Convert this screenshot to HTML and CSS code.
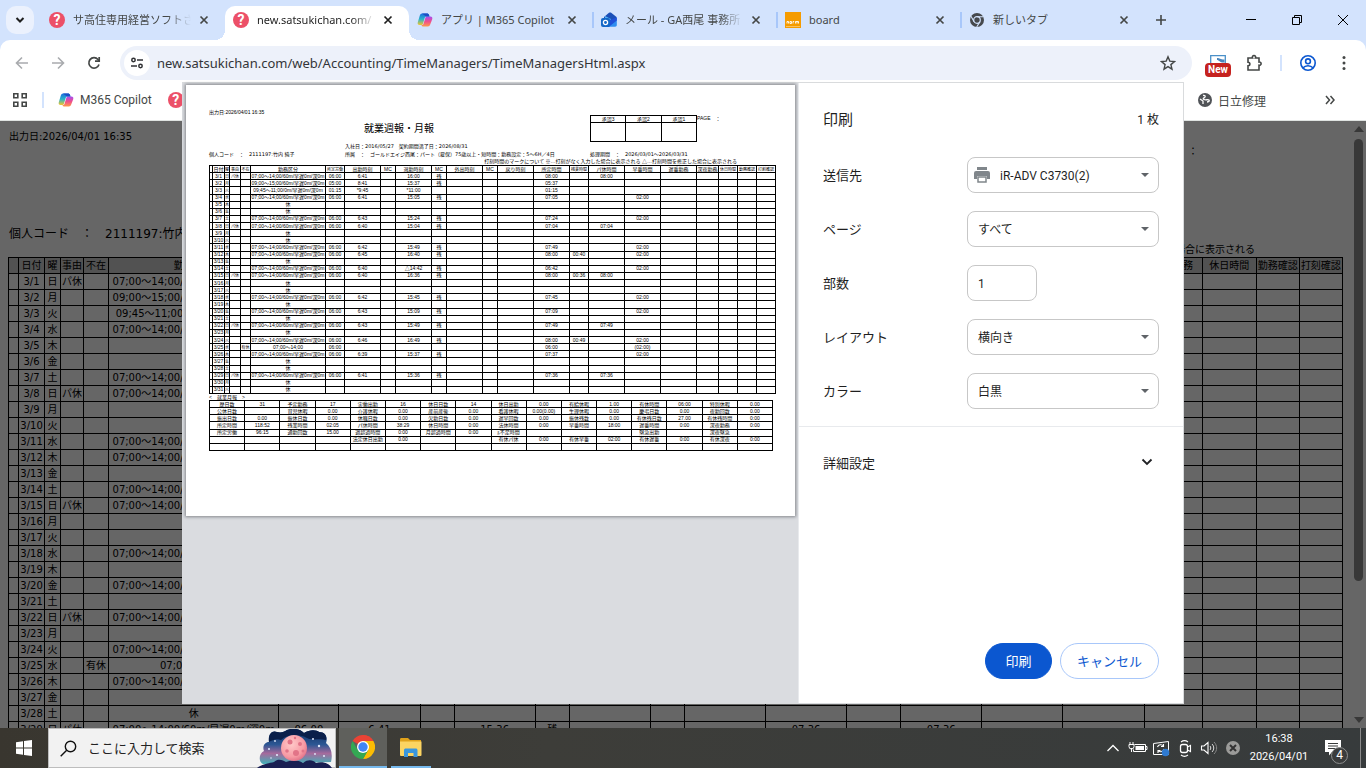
FILE: index.html
```
<!DOCTYPE html>
<html lang="ja">
<head>
    <meta charset="UTF-8">
    <meta name="viewport" content="width=device-width, initial-scale=1.0">
    <title>就業週報・月報</title>
    <link rel="stylesheet" href="styles.css">
</head>
<body>
    <!-- shared icons -->
    <svg class="defs" width="0" height="0" aria-hidden="true">
        <defs>
            <linearGradient id="cp-a" x1="0" y1="0" x2="0" y2="1">
                <stop offset="0" stop-color="#1b6fe0"/><stop offset="0.5" stop-color="#2bb5c9"/><stop offset="1" stop-color="#f5c62b"/>
            </linearGradient>
            <linearGradient id="cp-b" x1="0" y1="0" x2="0" y2="1">
                <stop offset="0" stop-color="#a74df0"/><stop offset="0.5" stop-color="#ef4f8c"/><stop offset="1" stop-color="#ff9a4a"/>
            </linearGradient>
            <symbol id="i-copilot" viewBox="0 0 16 16">
                <path d="M5 1.5h5c1 0 1.700.5 2 1.500l.5 1.500H9.500c-1 0-1.500.5-1.800 1.500L6 11.500c-.3 1-1 1.500-2 1.500H2.600C1 13 .3 12 .8 10.200L2.800 3.500C3.200 2.200 4 1.500 5 1.500z" fill="url(#cp-a)"/>
                <path d="M11 14.500H6.500c-1 0-1.700-.5-2-1.500 1.300 0 1.800-.6 2.100-1.600L8.300 6c.3-1 .9-1.500 1.900-1.500h3.200c1.600 0 2.300 1 1.800 2.700l-2 5.300c-.4 1.300-1.200 2-2.200 2z" fill="url(#cp-b)"/>
                <path d="M5 1.500h5c1 0 1.700.5 2 1.500l.5 1.500H9z" fill="#1c4fc4"/>
            </symbol>
            <symbol id="i-x" viewBox="0 0 10 10">
                <path d="M1.500 1.500l7 7M8.500 1.500l-7 7" stroke="currentColor" stroke-width="1.700"/>
            </symbol>
        </defs>
    </svg>

    <div class="tab-strip">
        <button class="tab-search" aria-label="タブを検索"><svg width="10" height="10" viewBox="0 0 10 10"><path d="M1.500 3l3.500 3.500L8.500 3" fill="none" stroke="#1f1f1f" stroke-width="2"/></svg></button>
        <div class="tab">
            <span class="fav-q">?</span>
            <span class="tab-title">サ高住専用経営ソフトさ</span>
            <button class="tab-close" aria-label="閉じる"><svg width="10" height="10"><use href="#i-x"/></svg></button>
        </div>
        <div class="tab active">
            <span class="fav-q">?</span>
            <span class="tab-title">new.satsukichan.com/</span>
            <button class="tab-close" aria-label="閉じる"><svg width="10" height="10"><use href="#i-x"/></svg></button>
        </div>
        <div class="tab">
            <svg class="fav" width="16" height="16"><use href="#i-copilot"/></svg>
            <span class="tab-title full">アプリ | M365 Copilot</span>
            <button class="tab-close" aria-label="閉じる"><svg width="10" height="10"><use href="#i-x"/></svg></button>
        </div>
        <div class="tab sep">
            <svg class="fav" width="16" height="16" viewBox="0 0 16 16">
                <path d="M3 5l5-4.200c.7-.5 1.500-.5 2.200 0L15.500 5v1L9 10 3 7z" fill="#1a4fb8"/>
                <path d="M4 4l6 3-2 4-4-1z" fill="#53b1f5"/>
                <path d="M15.800 5.500V13c0 1-.7 1.700-1.700 1.700H5L15.800 5.500z" fill="#2f8df0"/>
                <path d="M9 8l6.800-2.500v3L8 14.700H5z" fill="#2150d8"/>
                <rect x="0" y="6" width="9" height="9" rx="2" fill="#1468c7"/>
                <circle cx="4.500" cy="10.500" r="2.100" fill="none" stroke="#fff" stroke-width="1.300"/>
            </svg>
            <span class="tab-title">メール - GA西尾 事務所</span>
            <button class="tab-close" aria-label="閉じる"><svg width="10" height="10"><use href="#i-x"/></svg></button>
        </div>
        <div class="tab sep">
            <svg class="fav" width="16" height="16" viewBox="0 0 16 16">
                <rect width="16" height="16" fill="#f59b00"/>
                <path d="M2 11.500V9.500h1.500v2M5 9.500h1.500v2H5zM8 11.500v-2h1.200M10.500 11.500v-2h3v2M12 9.500v2" fill="none" stroke="#fff" stroke-width="0.900"/>
                <path d="M1 14.500h14" stroke="#fbd28a" stroke-width="0.700"/>
            </svg>
            <span class="tab-title full">board</span>
            <button class="tab-close" aria-label="閉じる"><svg width="10" height="10"><use href="#i-x"/></svg></button>
        </div>
        <div class="tab sep">
            <svg class="fav" width="16" height="16" viewBox="0 0 16 16">
                <circle cx="8" cy="8" r="7" fill="#46494d"/>
                <circle cx="8" cy="8" r="3.300" fill="#46494d" stroke="#d3e3fd" stroke-width="1.200"/>
                <path d="M8 4.700h6.500M5.100 9.700L2 4.300M10.900 9.700L7.700 15" stroke="#d3e3fd" stroke-width="1.100"/>
            </svg>
            <span class="tab-title full">新しいタブ</span>
            <button class="tab-close" aria-label="閉じる"><svg width="10" height="10"><use href="#i-x"/></svg></button>
        </div>
        <button class="new-tab" aria-label="新しいタブを開く"><svg width="12" height="12" viewBox="0 0 12 12"><path d="M6 1v10M1 6h10" stroke="#444746" stroke-width="1.600"/></svg></button>
        <div class="window-controls">
            <button aria-label="最小化"><svg width="10" height="10" viewBox="0 0 10 10"><path d="M0 4.500h10" stroke="#000"/></svg></button>
            <button aria-label="元に戻す"><svg width="10" height="10" viewBox="0 0 10 10"><path d="M.5 2.500h7v7h-7zM2.500 2.500v-2h7v7h-2" fill="none" stroke="#000"/></svg></button>
            <button aria-label="ウィンドウを閉じる"><svg width="10" height="10" viewBox="0 0 10 10"><path d="M0 0l10 10M10 0L0 10" stroke="#000"/></svg></button>
        </div>
    </div>

    <div class="chrome">
        <div class="toolbar">
            <button class="tool" aria-label="戻る"><svg width="16" height="16" viewBox="0 0 16 16"><path d="M14 8H3M8 2.500L2.500 8 8 13.500" fill="none" stroke="#a9abae" stroke-width="1.600"/></svg></button>
            <button class="tool" aria-label="進む"><svg width="16" height="16" viewBox="0 0 16 16"><path d="M2 8h11M8 2.500L13.500 8 8 13.500" fill="none" stroke="#a9abae" stroke-width="1.600"/></svg></button>
            <button class="tool" aria-label="再読み込み"><svg width="16" height="16" viewBox="0 0 16 16"><path d="M13 9.500A5.200 5.200 0 1 1 12 4.500l1.500 1.500" fill="none" stroke="#444746" stroke-width="1.700"/><path d="M13.200 2v4.200H9" fill="none" stroke="#444746" stroke-width="1.700"/></svg></button>
            <div class="omnibox">
                <button class="site-info" aria-label="サイト情報"><svg width="14" height="14" viewBox="0 0 14 14"><g fill="none" stroke="#303134" stroke-width="1.500"><circle cx="3.500" cy="4" r="1.700"/><path d="M7 4h6M1 10h6"/><circle cx="10.500" cy="10" r="1.700"/></g></svg></button>
                <input class="url" type="text" aria-label="アドレス" value="new.satsukichan.com/web/Accounting/TimeManagers/TimeManagersHtml.aspx">
                <button class="star" aria-label="ブックマークに追加"><svg width="16" height="16" viewBox="0 0 16 16"><path d="M8 1.800l1.800 4.300 4.700.4-3.600 3.100 1.100 4.600L8 11.700l-4 2.500 1.100-4.600L1.500 6.500l4.700-.4z" fill="none" stroke="#444746" stroke-width="1.400"/></svg></button>
            </div>
            <button class="ext" aria-label="拡張機能"><svg width="16" height="12" viewBox="0 0 16 12"><path d="M.7 12V.7h14.600V12" fill="#fff" stroke="#4a90c8" stroke-width="1.300"/><path d="M7 3c3 0 3 1.500 7.500 1.500v3C10 8 9 5 7 5z" fill="#4a86bd"/></svg><span class="badge">New</span></button>
            <button class="tool" aria-label="拡張機能メニュー"><svg width="18" height="18" viewBox="0 0 18 18"><path d="M3 4h4.500a1.700 1.700 0 1 1 3 0H14v4a1.700 1.700 0 1 1 0 3.300V16H3v-4.300c2.500 0 2.500-3.400 0-3.400z" fill="none" stroke="#444746" stroke-width="1.600"/></svg></button>
            <span class="v-sep"></span>
            <button class="tool" aria-label="プロフィール"><svg width="18" height="18" viewBox="0 0 18 18"><g fill="none" stroke="#0b57d0" stroke-width="1.600"><circle cx="9" cy="9" r="7.200"/><circle cx="9" cy="7.300" r="2.400"/><path d="M3.800 14c2.800-3 7.600-3 10.400 0"/></g></svg></button>
            <button class="tool" aria-label="メニュー"><svg width="4" height="16" viewBox="0 0 4 16"><g fill="#444746"><circle cx="2" cy="2.500" r="1.500"/><circle cx="2" cy="8" r="1.500"/><circle cx="2" cy="13.500" r="1.500"/></g></svg></button>
        </div>
        <div class="bookmarks">
            <button class="apps" aria-label="アプリ"><svg width="14" height="14" viewBox="0 0 14 14"><path d="M.8.8h4v4h-4zM9.200.8h4v4h-4zM.8 9.200h4v4h-4zM9.200 9.200h4v4h-4z" fill="none" stroke="#444746" stroke-width="1.600"/></svg></button>
            <span class="v-sep"></span>
            <a href="#"><svg width="16" height="16"><use href="#i-copilot"/></svg>M365 Copilot</a>
            <a href="#" aria-label="さつき"><span class="fav-q">?</span></a>
            <a href="#" class="last"><svg width="14" height="14" viewBox="0 0 14 14"><circle cx="7" cy="7" r="7" fill="#505357"/><path d="M5 2.500c2-.5 2.500.5 2 1.500S4 5.500 6 6.500s4-.5 5 .5-1 2-2 2M2 6l3 2v3" fill="none" stroke="#fff" stroke-width="1.300"/></svg>日立修理</a>
            <button class="more" aria-label="その他のブックマーク"><svg width="10" height="10" viewBox="0 0 10 10"><path d="M1 1l3.500 4L1 9M5.500 1L9 5 5.500 9" fill="none" stroke="#444746" stroke-width="1.500"/></svg></button>
        </div>
    </div>

    <main class="viewport">
        <div class="report">
            <div class="report-head">
                <span class="printed">出力日:2026/04/01 16:35</span>
                <h1>就業週報・月報</h1>
                <div class="approval">
                    <table>
                        <tr><th>承認3</th><th>承認2</th><th>承認1</th></tr>
                        <tr><td></td><td></td><td></td></tr>
                    </table>
                    <span>PAGE　：</span>
                </div>
                <span class="joined">入社日：2016/05/27　契約期間満了日：2026/08/31</span>
                <span class="code">個人コード　：　2111197:竹内 純子</span>
                <span class="team">所属　：　ゴールドエイジ西尾：パート（雇保）75歳以上・短時間：勤務設定：5～6H／4日</span>
                <span class="period">処理期間　：　2026/03/01～2026/03/31</span>
                <span class="note">打刻時間のマークについて ※…打刻がなく入力した場合に表示される △…打刻時間を修正した場合に表示される</span>
            </div>
            <table class="days"></table>
        </div>
        <div class="scrim"></div>
        <div class="scrollbar"><i class="up"></i><i class="thumb"></i><i class="down"></i></div>
    </main>

    <div class="dialog-layer">
        <div class="dialog" role="dialog" aria-label="印刷">
            <div class="preview">
                <div class="sheet report print">
                    <div class="report-head">
                        <span class="printed">出力日:2026/04/01 16:35</span>
                        <h1>就業週報・月報</h1>
                        <div class="approval">
                            <table>
                                <tr><th>承認3</th><th>承認2</th><th>承認1</th></tr>
                                <tr><td></td><td></td><td></td></tr>
                            </table>
                            <span>PAGE　：</span>
                        </div>
                        <span class="joined">入社日：2016/05/27　契約期間満了日：2026/08/31</span>
                        <span class="code">個人コード　：　2111197:竹内 純子</span>
                        <span class="team">所属　：　ゴールドエイジ西尾：パート（雇保）75歳以上・短時間：勤務設定：5～6H／4日</span>
                        <span class="period">処理期間　：　2026/03/01～2026/03/31</span>
                        <span class="note">打刻時間のマークについて ※…打刻がなく入力した場合に表示される △…打刻時間を修正した場合に表示される</span>
                    </div>
                    <table class="days"></table>
                    <p class="month-label">&lt;　就業月報　&gt;</p>
                    <table class="month"></table>
                </div>
            </div>
            <form class="settings">
                <div class="settings-head"><h2>印刷</h2><span>1 枚</span></div>
                <div class="field">
                    <label for="dest">送信先</label>
                    <div class="select with-icon">
                        <svg width="18" height="18" viewBox="0 0 18 18"><path d="M4 1h10v3H4z" fill="#80868b"/><path d="M3 5h12a2 2 0 0 1 2 2v6h-3v-3H4v3H1V7a2 2 0 0 1 2-2z" fill="#80868b"/><path d="M5 11h8v5H5z" fill="#fff" stroke="#80868b" stroke-width="1.500"/></svg>
                        <select id="dest"><option>iR-ADV C3730(2)</option></select>
                    </div>
                </div>
                <div class="field">
                    <label for="pages">ページ</label>
                    <div class="select"><select id="pages"><option>すべて</option></select></div>
                </div>
                <div class="field">
                    <label for="copies">部数</label>
                    <input id="copies" type="text" value="1">
                </div>
                <div class="field">
                    <label for="layout">レイアウト</label>
                    <div class="select"><select id="layout"><option>横向き</option></select></div>
                </div>
                <div class="field">
                    <label for="color">カラー</label>
                    <div class="select"><select id="color"><option>白黒</option></select></div>
                </div>
                <button type="button" class="advanced">詳細設定<svg width="12" height="12" viewBox="0 0 12 12"><path d="M1.500 3.500L6 8l4.500-4.500" fill="none" stroke="#202124" stroke-width="1.800"/></svg></button>
                <div class="actions">
                    <button type="button" class="primary">印刷</button>
                    <button type="button" class="secondary">キャンセル</button>
                </div>
            </form>
        </div>
    </div>

    <footer class="taskbar">
        <button class="start" aria-label="スタート"><svg width="16" height="16" viewBox="0 0 16 16"><path d="M0 2.300L7 1.300V7.600H0zM8 1.100L16 0v7.600H8zM0 8.400h7v6.300l-7-1zM8 8.400h8V16l-8-1.100z" fill="#fff"/></svg></button>
        <label class="search">
            <svg width="17" height="17" viewBox="0 0 17 17"><circle cx="10.500" cy="6.500" r="5.200" fill="none" stroke="#111" stroke-width="1.400"/><path d="M6.700 10.300L.7 16.300" stroke="#111" stroke-width="1.400"/></svg>
            <input type="text" placeholder="ここに入力して検索" aria-label="検索">
            <svg class="moon" width="76" height="39" viewBox="0 0 76 39">
                <defs>
                    <linearGradient id="sky" x1="0" y1="0" x2="0" y2="1"><stop offset="0" stop-color="#0c2a5c"/><stop offset="0.450" stop-color="#2c5794"/><stop offset="0.700" stop-color="#a56a9c"/><stop offset="1" stop-color="#3fb0b8"/></linearGradient>
                    <radialGradient id="moon-g" cx="0.400" cy="0.350" r="0.700"><stop offset="0" stop-color="#ffc9c9"/><stop offset="0.700" stop-color="#f79aa4"/><stop offset="1" stop-color="#e06f86"/></radialGradient>
                </defs>
                <path d="M6 35C1 33 2 24 7 22 5 17 8 13 12 13 11 5 15 1 20 3 24 4 27 3 30 1 35-1 42-1 47 4 53 0 60 1 62 3 69 3 71 9 69 14 74 18 76 25 74 33z" fill="url(#sky)"/>
                <path d="M12 13C11 5 15 1 20 3 24 4 27 3 30 1 35-1 42-1 47 4 53 0 60 1 62 3 68 3 70 7 69 11 62 9 56 12 50 9 40 4 30 6 24 11 20 9 15 11 12 13z" fill="#0a1f4a"/>
                <g fill="#dfe8fb"><circle cx="12" cy="20" r="1"/><circle cx="18" cy="12" r=".9"/><circle cx="20" cy="26" r="1.100"/><circle cx="56" cy="10" r="1"/><circle cx="62" cy="17" r="1.200"/><circle cx="58" cy="25" r=".9"/><circle cx="67" cy="27" r="1"/><circle cx="14" cy="29" r=".8"/></g>
                <path d="M0 39c3-3 12-5 17-6 4-4 9-2 12 0 6-2 12-2 17 1 5-4 10-3 13 0 6-2 13 0 16 5z" fill="#191f52"/>
                <circle cx="37" cy="19" r="13" fill="url(#moon-g)"/>
                <g fill="#e27488"><circle cx="33" cy="13" r="2.500"/><circle cx="43" cy="15" r="2"/><circle cx="30" cy="22" r="1.800"/><circle cx="39" cy="24" r="3"/><circle cx="46" cy="22" r="1.500"/><circle cx="38" cy="9" r="1.200"/></g>
            </svg>
        </label>
        <button class="app open" aria-label="Chrome"><svg width="24" height="24" viewBox="0 0 24 24"><path d="M12 12L1.600 6A12 12 0 0 1 22.400 6z" fill="#ea4335"/><path d="M12 12V0a12 12 0 0 1 10.400 6z" fill="#ea4335"/><path d="M12 6h10.400A12 12 0 0 1 12 24l5-9z" fill="#fbbc04"/><path d="M1.600 6A12 12 0 0 0 12 24l5.200-9L12 12 6.800 15z" fill="#34a853"/><circle cx="12" cy="12" r="6" fill="#fff"/><circle cx="12" cy="12" r="4.700" fill="#4285f4"/></svg></button>
        <button class="app" aria-label="エクスプローラー"><svg width="22" height="19" viewBox="0 0 22 19"><path d="M0 1.500C0 .7.500 0 1.300 0H8l2 2h11v5H0z" fill="#e0a21b"/><path d="M0 3.500h21.500V17a1 1 0 0 1-1 1H1a1 1 0 0 1-1-1z" fill="#fcd462"/><path d="M4 19v-6.500c0-1.500.7-2 2-2h9.500c1.300 0 2 .5 2 2V19h-4v-4h-5.500v4z" fill="#3a96dd"/></svg></button>
        <div class="tray">
            <svg width="24" height="24" viewBox="0 0 24 24"><path d="M6.500 15L12 9.500l5.500 5.500" fill="none" stroke="#fff" stroke-width="1.300"/></svg>
            <svg width="24" height="24" viewBox="0 0 24 24"><path d="M9.500 8.500h11v7H8.500v-2M20.500 10.500h1.500v3h-1.500" fill="none" stroke="#fff"/><path d="M10.500 10h8.500v4h-8.500z" fill="#fff"/><path d="M5 6v2.500M8 6v2.500M4 8.500h5v2a2 2 0 0 1-5 0zM6.500 12v4" fill="none" stroke="#fff"/></svg>
            <svg width="24" height="24" viewBox="0 0 24 24"><path d="M4.500 7.500l15-2v13H4.500z" fill="none" stroke="#fff"/><path d="M8.500 11a3.500 3.500 0 0 1 6-1M14.500 8v2.500H12M15 13a3.500 3.500 0 0 1-6 1.500M9 17v-2.500h2.500" fill="none" stroke="#fff" stroke-width="1.100"/><circle cx="16.500" cy="16.500" r="3.800" fill="#2f7ad1"/></svg>
            <svg width="24" height="24" viewBox="0 0 24 24"><rect x="7.500" y="8.500" width="7" height="8" rx="2" fill="none" stroke="#fff" stroke-width="1.300"/><path d="M14.500 11l3-1.500v6l-3-1.500M8 6c2-1.500 5-1.500 7 0M8 19c2 1.500 5 1.500 7 0" fill="none" stroke="#fff" stroke-width="1.100"/></svg>
            <svg width="24" height="24" viewBox="0 0 24 24"><path d="M4.500 10v4H7l4 3.500v-11L7 10z" fill="none" stroke="#fff" stroke-width="1.100"/><path d="M13 10c1 1 1 3 0 4M15 8c2.300 2.300 2.300 5.700 0 8" fill="none" stroke="#ddd"/><path d="M17 6c3.500 3.500 3.500 8.500 0 12" fill="none" stroke="#888"/></svg>
            <svg width="24" height="24" viewBox="0 0 24 24"><circle cx="12" cy="12" r="7" fill="#9b9b99"/><path d="M9 9l6 6M15 9l-6 6" stroke="#333" stroke-width="2"/></svg>
        </div>
        <div class="clock"><span>16:38</span><span>2026/04/01</span></div>
        <button class="notice" aria-label="通知"><svg width="16" height="16" viewBox="0 0 16 16"><path d="M0 0h16v12H7l-3 3.500V12H0z" fill="#fff"/><path d="M3 3.500h10M3 6h10M3 8.500h7" stroke="#3a3c3c" stroke-width="1.200"/></svg><span>4</span></button>
    </footer>

    <script src="script.js"></script>
</body>
</html>
```

FILE: styles.css
```
* {
    box-sizing: border-box;
    margin: 0;
    padding: 0;
}

body {
    display: flex;
    flex-direction: column;
    height: 100vh;
    overflow: hidden;
    position: relative;
    font-family: Roboto, "Noto Sans CJK JP", sans-serif;
    font-size: 12px;
    color: #1f1f1f;
    background: #d3e3fd;
}

button {
    border: none;
    background: none;
    font: inherit;
    color: inherit;
    display: flex;
    align-items: center;
    justify-content: center;
}

input, select {
    font: inherit;
    color: inherit;
    border: none;
    background: none;
    outline: none;
    min-width: 0;
}

.defs {
    position: absolute;
}

/* tab strip */
.tab-strip {
    display: flex;
    align-items: center;
    height: 40px;
    padding-left: 6px;
    flex: none;
}

.tab-search {
    width: 28px;
    height: 28px;
    border-radius: 10px;
    background: #ebf1fd;
    margin-right: 7px;
}

.tab {
    display: flex;
    align-items: center;
    flex: 0 1 184px;
    height: 34px;
    margin-top: 6px;
    padding: 0 16px 6px 8px;
    gap: 8px;
    min-width: 0;
    position: relative;
    color: #444746;
}

.tab.active {
    background: #fff;
    border-radius: 10px 10px 0 0;
    color: #1f1f1f;
}

.tab.active::before,
.tab.active::after {
    content: "";
    position: absolute;
    bottom: 0;
    width: 10px;
    height: 10px;
}

.tab.active::before {
    left: -10px;
    background: radial-gradient(circle at 0 0, transparent 10px, #fff 10px);
}

.tab.active::after {
    right: -10px;
    background: radial-gradient(circle at 100% 0, transparent 10px, #fff 10px);
}

.tab.sep::before {
    content: "";
    position: absolute;
    left: -1px;
    top: 6px;
    width: 2px;
    height: 16px;
    background: #a8c7fa;
}

.tab-title {
    flex: 1;
    overflow: hidden;
    white-space: nowrap;
    font-family: "Noto Sans", "Noto Sans CJK JP", sans-serif;
    font-size: 11px;
    line-height: 20px;
    -webkit-mask-image: linear-gradient(to right, #000 80%, transparent);
    mask-image: linear-gradient(to right, #000 80%, transparent);
}

.tab-title.full {
    -webkit-mask-image: none;
    mask-image: none;
}

.tab-close {
    width: 10px;
    height: 16px;
}

.fav,
.fav-q {
    flex: none;
}

.fav-q {
    width: 16px;
    height: 16px;
    border-radius: 50%;
    background: #ec5068;
    color: #fff;
    font-size: 14px;
    font-weight: 700;
    line-height: 16px;
    text-align: center;
}

.new-tab {
    width: 28px;
    height: 28px;
    margin-left: 2px;
}

.window-controls {
    display: flex;
    margin-left: auto;
}

.window-controls button {
    width: 46px;
    height: 40px;
}

/* toolbar and bookmarks */
.chrome {
    flex: none;
    background: #fff;
    border-radius: 10px 10px 0 0;
    border-bottom: 1px solid #dfe3e1;
}

.toolbar {
    display: flex;
    align-items: center;
    height: 46px;
    padding: 0 4px;
}

.tool {
    width: 36px;
    height: 34px;
}

.omnibox {
    flex: 1;
    display: flex;
    align-items: center;
    height: 34px;
    margin: 0 8px;
    padding: 0 16px 0 4px;
    border-radius: 17px;
    background: #edf1fa;
}

.site-info {
    width: 26px;
    height: 26px;
    border-radius: 50%;
    background: #fff;
}

.url {
    flex: 1;
    margin-left: 7px;
    font-family: "Noto Sans", sans-serif;
    font-size: 13px;
    line-height: 20px;
    color: #333538;
}

.ext {
    position: relative;
    width: 36px;
    height: 34px;
}

.ext svg {
    margin-bottom: 4px;
}

.badge {
    position: absolute;
    left: 5px;
    bottom: 3px;
    width: 26px;
    height: 14px;
    border-radius: 4px;
    background: #c5221f;
    color: #fff;
    font-size: 10px;
    font-weight: 700;
    line-height: 14px;
}

.v-sep {
    width: 2px;
    height: 16px;
    margin: 0 8px;
    background: #d3e3fd;
}

.bookmarks {
    display: flex;
    align-items: center;
    height: 34px;
    padding: 0 31px 6px 13px;
}

.bookmarks .v-sep {
    margin: 0 14px 0 15px;
}

.bookmarks a {
    display: flex;
    align-items: center;
    gap: 6px;
    margin-right: 16px;
    color: #444746;
    text-decoration: none;
}

.bookmarks .last {
    margin-left: auto;
    margin-right: 59px;
}

/* page behind the dialog */
.viewport {
    flex: 1;
    min-height: 0;
    overflow: hidden;
    position: relative;
    background: #fff;
}

.scrim {
    position: absolute;
    inset: 0;
    background: rgba(0, 0, 0, 0.6);
}

.scrollbar {
    position: absolute;
    top: 0;
    right: 0;
    bottom: 0;
    width: 15px;
    display: flex;
    flex-direction: column;
    align-items: center;
    padding: 5px 0;
}

.scrollbar .up,
.scrollbar .down {
    border: 5px solid transparent;
    border-top-width: 0;
    border-bottom: 6px solid #383838;
}

.scrollbar .down {
    margin-top: auto;
    border-top: 6px solid #383838;
    border-bottom-width: 0;
}

.scrollbar .thumb {
    width: 9px;
    height: 74%;
    margin-top: 7px;
    border-radius: 5px;
    background: #383838;
}

/* report, full size */
.report {
    padding: 7px 0 0 8px;
    font-family: "DejaVu Sans", "Noto Sans CJK JP", sans-serif;
    font-size: 10px;
    line-height: 15px;
    color: #000;
}

.report-head {
    display: grid;
    grid-template-columns: 320px 580px 1fr;
    grid-template-rows: 16px 64px 18px 16px 15px;
    align-items: center;
    padding-left: 1px;
    white-space: nowrap;
}

.report-head h1 {
    grid-area: 2 / 2;
    padding-left: 45px;
    font-size: 22px;
    font-weight: 400;
}

.report-head .printed { grid-area: 1 / 1; }
.report-head .joined { grid-area: 3 / 2; }
.report-head .code { grid-area: 4 / 1; }
.report-head .team { grid-area: 4 / 2; }
.report-head .period { grid-area: 4 / 3; }

.report-head .joined,
.report-head .code,
.report-head .team,
.report-head .period {
    font-size: 12px;
}

.report-head .note {
    grid-area: 5 / 1 / 6 / 4;
    justify-self: end;
    margin-right: 111px;
}

.approval {
    grid-area: 2 / 3;
    align-self: stretch;
    display: flex;
}

.approval table {
    width: 243px;
    height: 100%;
}

.approval tr:first-child {
    height: 16px;
}

.report table {
    border-collapse: collapse;
    table-layout: fixed;
}

.report th,
.report td {
    border: 1px solid #000;
    font-weight: 400;
    text-align: center;
    white-space: nowrap;
}

.days {
    width: 1335px;
}

.days th {
    background: #ccc;
}

.days tr {
    height: 16px;
}

.days .w-blank { width: 10px; }
.days .w-date { width: 26px; }
.days .w-dow { width: 16px; }
.days .w-reason { width: 23px; }
.days .w-absent { width: 25px; }
.days .w-shift { width: 170px; }
.days .w-plan { width: 60px; }
.days .w-time { width: 81px; }
.days .w-mc { width: 34px; }
.days .w-over { width: 54px; }
.days .w-night { width: 58px; }
.days .w-off { width: 54px; }
.days .w-check { width: 43px; }

/* report, print preview size */
.report.print {
    padding: 23px 0 0 23px;
    font-family: "Liberation Sans", "Noto Sans CJK JP", sans-serif;
    font-size: 5px;
    line-height: 6px;
}

.print .report-head {
    grid-template-columns: 136px 245px 1fr;
    grid-template-rows: 7px 27px 8px 7px 8px;
    padding-left: 0;
}

.print .report-head h1 {
    padding-left: 19px;
    font-size: 10px;
}

.print .report-head .joined,
.print .report-head .code,
.print .report-head .team,
.print .report-head .period {
    font-family: "DejaVu Sans", "Noto Sans CJK JP", sans-serif;
    font-size: 5px;
}

.print .report-head .note {
    margin-right: 58px;
}

.print .approval table {
    width: 107px;
}

.print .approval tr:first-child {
    height: 7px;
}

.print .days {
    width: 567px;
    height: 229px;
}

.print .days th {
    background: none;
}

.print .days tr {
    height: 7px;
}

.print .days .w-blank { width: 3px; }
.print .days .w-date { width: 12px; }
.print .days .w-dow { width: 5px; }
.print .days .w-reason { width: 11px; }
.print .days .w-absent { width: 10px; }
.print .days .w-shift { width: 75px; }
.print .days .w-plan { width: 19px; }
.print .days .w-time { width: 36px; }
.print .days .w-mc { width: 15px; }
.print .days .w-over { width: 19px; }
.print .days .w-night { width: 22px; }
.print .days .w-off { width: 19px; }
.print .days .w-check { width: 19px; }

.print th,
.print td {
    line-height: 5px;
}

/* narrow columns */
.print .days td:nth-child(3),
.print .days td:nth-child(4),
.print .days td:nth-child(5),
.print .days th:nth-child(3),
.print .days th:nth-child(4),
.print .days th:nth-child(5),
.print .days th:nth-child(7),
.print .days th:nth-child(16),
.print .days th:nth-child(n+21) {
    font-size: 4px;
}

.month-label {
    line-height: 6px;
}

.month {
    width: 564px;
    height: 51px;
}

.month tr {
    height: 7px;
}

/* print dialog */
.dialog-layer {
    position: absolute;
    inset: 82px 0 64px;
    display: flex;
    justify-content: center;
}

.dialog {
    display: flex;
    width: 1002px;
    max-width: 100%;
    background: #fff;
    border: 1px solid #d9dbdd;
    border-left: none;
}

.preview {
    flex: 1;
    min-width: 0;
    padding: 2px 3px 0 4px;
    background: #dadce0;
}

.sheet {
    aspect-ratio: 297 / 210;
    background: #fff;
    box-shadow: 0 0 3px 1px #85878c;
}

.settings {
    width: 385px;
    display: flex;
    flex-direction: column;
    border-left: 1px solid #e8eaed;
}

.settings-head {
    display: flex;
    justify-content: space-between;
    align-items: center;
    height: 74px;
    padding: 0 24px 4px;
}

.settings-head h2 {
    font-size: 15px;
    font-weight: 400;
}

.field {
    display: flex;
    align-items: center;
    height: 36px;
    margin-bottom: 18px;
    padding: 0 24px;
}

.field label {
    flex: 1;
    padding-bottom: 2px;
    font-size: 13px;
}

.select {
    position: relative;
    width: 192px;
}

.select::after {
    content: "";
    position: absolute;
    right: 10px;
    top: 16px;
    border: 4px solid transparent;
    border-top-color: #5f6368;
    border-bottom-width: 0;
}

.select svg {
    position: absolute;
    left: 6px;
    top: 9px;
}

.select select,
.field input {
    width: 100%;
    height: 36px;
    padding: 1px 10px 0;
    border: 1px solid #c7c7c7;
    border-radius: 8px;
    appearance: none;
}

.select.with-icon select {
    padding-left: 32px;
}

.field input {
    width: 70px;
    margin-right: 122px;
}

.advanced {
    justify-content: space-between;
    height: 71px;
    margin-top: -1px;
    padding: 0 30px 0 24px;
    border-top: 1px solid #e8eaed;
    font-size: 13px;
}

.actions {
    display: flex;
    justify-content: flex-end;
    gap: 8px;
    margin-top: auto;
    padding: 0 24px 24px;
}

.actions button {
    height: 36px;
    padding: 0 16px 2px;
    border: 1px solid #a8c7fa;
    border-radius: 18px;
    font-size: 13px;
    color: #0b57d0;
}

.actions .primary {
    min-width: 67px;
    border-color: #0b57d0;
    background: #0b57d0;
    color: #fff;
}

/* taskbar */
.taskbar {
    flex: none;
    display: flex;
    align-items: center;
    height: 40px;
    padding-right: 5px;
    background: linear-gradient(to right, #39362f, #3d3d39 40%, #373b3c);
    color: #fff;
}

.start {
    width: 48px;
    height: 40px;
}

.search {
    display: flex;
    align-items: center;
    width: 288px;
    height: 40px;
    padding: 0 2px 0 11px;
    background: #f2f2f2;
    border: 1px solid #bdbdbd;
}

.search input {
    flex: 1;
    margin-left: 11px;
    font-size: 13px;
}

.search input::placeholder {
    color: #222;
}

.app {
    width: 40px;
    height: 40px;
    margin-left: 4px;
    border-bottom: 2px solid #76b9ed;
}

.app.open {
    width: 48px;
    margin-left: 3px;
    background: #5f605c;
}

.tray {
    display: flex;
    margin-left: auto;
}

.clock {
    width: 68px;
    display: flex;
    flex-direction: column;
    align-items: center;
    line-height: 18px;
    font-size: 11px;
}

.notice {
    position: relative;
    width: 48px;
    height: 40px;
    border-right: 1px solid #8a8a8a;
}

.notice svg {
    margin-right: 8px;
}

.notice span {
    position: absolute;
    right: 12px;
    bottom: 4px;
    width: 17px;
    height: 17px;
    border: 1px solid #8d8f8f;
    border-radius: 50%;
    background: #3a3c3c;
    line-height: 15px;
    text-align: center;
}
```

FILE: script.js
```
const columns = [
    ['', 'blank'], ['日付', 'date'], ['曜', 'dow'], ['事由', 'reason'], ['不在', 'absent'],
    ['勤務区分', 'shift'], ['所定労働', 'plan'], ['出勤時刻', 'time'], ['MC', 'mc'],
    ['退勤時刻', 'time'], ['MC', 'mc'], ['外出時刻', 'time'], ['MC', 'mc'], ['戻り時刻', 'time'],
    ['所定時間', 'time'], ['残業時間', 'over'], ['パ休時間', 'time'], ['早番時間', 'time'],
    ['遅番勤務', 'time'], ['深夜勤務', 'night'], ['休日時間', 'off'], ['勤務確認', 'check'], ['打刻確認', 'check']
];

const FULL = '07;00～14;00/60m/早遅0m/深0m';

// reason, absence, shift, planned, in, out, mark, worked, overtime, paid part, early
const worked = {
    1: ['パ休', '', FULL, '06:00', '6:41', '16:00', '残', '08:00', '', '08:00', ''],
    2: ['', '', '09;00～15;00/60m/早遅0m/深0m', '05:00', '8:41', '15:37', '残', '05:37', '', '', ''],
    3: ['', '', '09;45～11;00/0m/早遅0m/深0m', '01:15', '*9:45', '*11:00', '', '01:15', '', '', ''],
    4: ['', '', FULL, '06:00', '6:41', '15:05', '残', '07:05', '', '', '02:00'],
    7: ['', '', FULL, '06:00', '6:43', '15:24', '残', '07:24', '', '', '02:00'],
    8: ['パ休', '', FULL, '06:00', '6:40', '15:04', '残', '07:04', '', '07:04', ''],
    11: ['', '', FULL, '06:00', '6:42', '15:49', '残', '07:49', '', '', '02:00'],
    12: ['', '', FULL, '06:00', '6:45', '16:40', '残', '08:00', '00:40', '', '02:00'],
    14: ['', '', FULL, '06:00', '6:40', '△14:42', '残', '06:42', '', '', '02:00'],
    15: ['パ休', '', FULL, '06:00', '6:40', '16:36', '残', '08:00', '00:36', '08:00', ''],
    18: ['', '', FULL, '06:00', '6:42', '15:45', '残', '07:45', '', '', '02:00'],
    20: ['', '', FULL, '06:00', '6:43', '15:09', '残', '07:09', '', '', '02:00'],
    22: ['パ休', '', FULL, '06:00', '6:43', '15:49', '残', '07:49', '', '07:49', ''],
    24: ['', '', FULL, '06:00', '6:46', '16:49', '残', '08:00', '00:49', '', '02:00'],
    25: ['', '有休', '07;00～14;00', '06:00', '', '', '', '06:00', '', '', '(02:00)'],
    26: ['', '', FULL, '06:00', '6:39', '15:37', '残', '07:37', '', '', '02:00'],
    29: ['パ休', '', FULL, '06:00', '6:41', '15:36', '残', '07:36', '', '07:36', '']
};

const month = [
    ['歴日数', '31', '予定勤務', '17', '実働出勤', '16', '休日日数', '14', '休日出勤', '0.00', '有給休暇', '1.00', '有休時間', '06:00', '特別休暇', '0.00'],
    ['公休日数', '', '育児休暇', '0.00', '介護休暇', '0.00', '産前産後', '0.00', '看護休暇', '0.00(0.00)', '生理休暇', '0.00', '慶弔日数', '0.00', '夜勤回数', '0.00'],
    ['振出日数', '0.00', '振休日数', '0.00', '休職日数', '0.00', '欠勤日数', '0.00', '遅早回数', '0.00', '振休残数', '0.00', '有休残日数', '27.00', '有休残時間', '0:00'],
    ['所定時間', '118:52', '残業時間', '02:05', 'パ休時間', '38:29', '休日時間', '0:00', '法休時間', '0:00', '早番時間', '18:00', '遅番時間', '0:00', '深夜勤務', '0:00'],
    ['所定労働', '96:15', '通勤回数', '15.00', '週超過時間', '0:00', '月超過時間', '0:00', 'ﾙ不足時間', '', '', '', '緊急出勤', '', '深夜緊急', ''],
    ['', '', '', '', '法定休日出勤', '0.00', '', '', '有休パ休', '0:00', '有休早番', '02:00', '有休遅番', '0:00', '有休深夜', '0:00'],
    ['', '', '', '', '', '', '', '', '', '', '', '', '', '', '', '']
];

function row(cells, tag) {
    return '<tr>' + cells.map(c => `<${tag}>${c}</${tag}>`).join('') + '</tr>';
}

function dayCells(day) {
    const dow = '日月火水木金土'[(day - 1) % 7];
    const w = worked[day];
    const cells = ['', `3/${day}`, dow];
    if (w) {
        cells.push(w[0], w[1], w[2], w[3], w[4], '', w[5], w[6], '', '', '', w[7], w[8], w[9], w[10]);
    } else {
        cells.push('', '', '休');
    }
    while (cells.length < columns.length) cells.push('');
    return cells;
}

document.querySelectorAll('.days').forEach(table => {
    let html = '<colgroup>' + columns.map(c => `<col class="w-${c[1]}">`).join('') + '</colgroup>';
    html += row(columns.map(c => c[0]), 'th');
    for (let day = 1; day <= 31; day++) {
        html += row(dayCells(day), 'td');
    }
    table.innerHTML = html;
});

document.querySelector('.month').innerHTML = month.map(cells => row(cells, 'td')).join('');
```
